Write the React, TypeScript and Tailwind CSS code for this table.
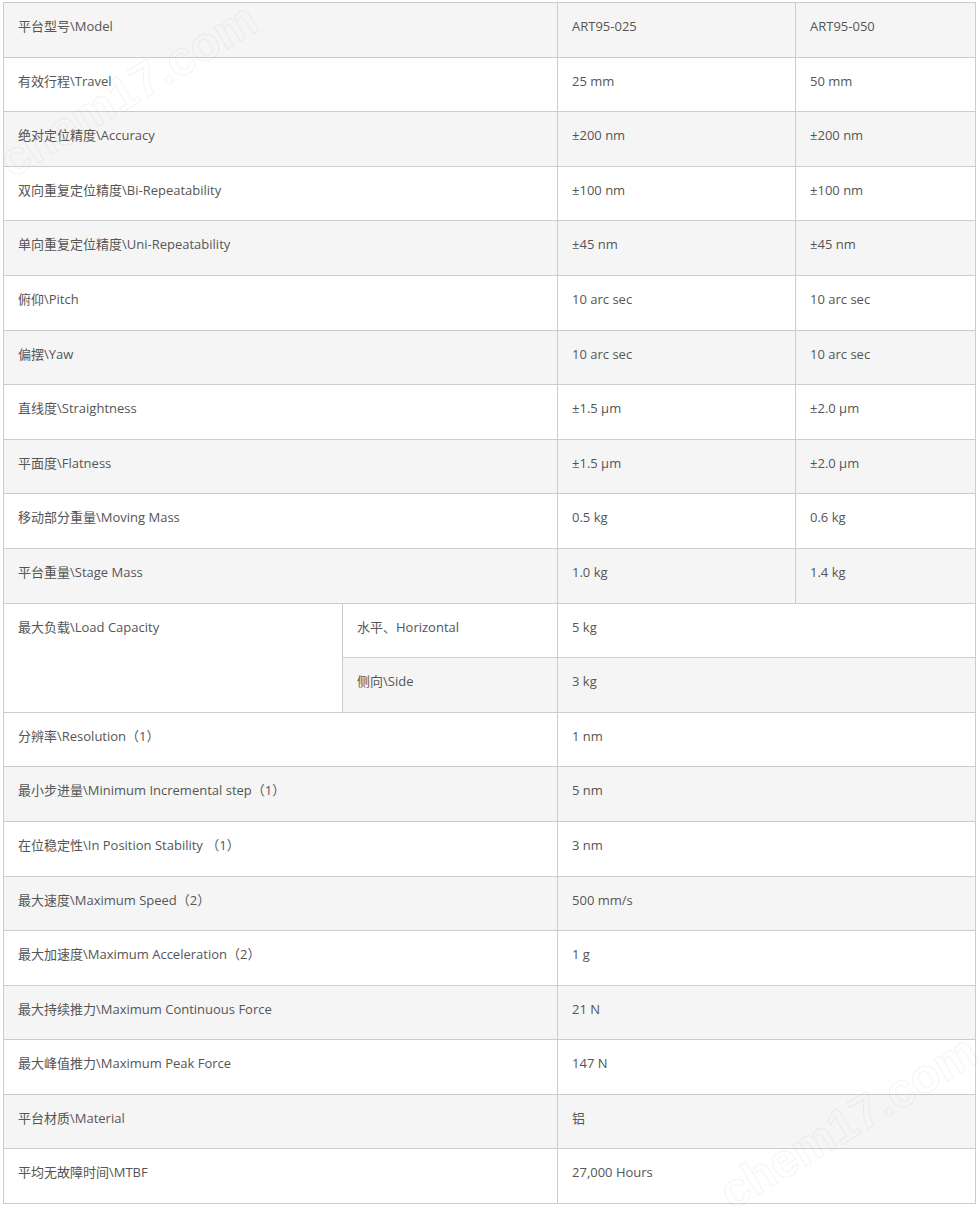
import React from "react";

type Row = { label: string; a: string; b?: string };

const topRows: Row[] = [
  { label: "平台型号\\Model", a: "ART95-025", b: "ART95-050" },
  { label: "有效行程\\Travel", a: "25 mm", b: "50 mm" },
  { label: "绝对定位精度\\Accuracy", a: "±200 nm", b: "±200 nm" },
  { label: "双向重复定位精度\\Bi-Repeatability", a: "±100 nm", b: "±100 nm" },
  { label: "单向重复定位精度\\Uni-Repeatability", a: "±45 nm", b: "±45 nm" },
  { label: "俯仰\\Pitch", a: "10 arc sec", b: "10 arc sec" },
  { label: "偏摆\\Yaw", a: "10 arc sec", b: "10 arc sec" },
  { label: "直线度\\Straightness", a: "±1.5 µm", b: "±2.0 µm" },
  { label: "平面度\\Flatness", a: "±1.5 µm", b: "±2.0 µm" },
  { label: "移动部分重量\\Moving Mass", a: "0.5 kg", b: "0.6 kg" },
  { label: "平台重量\\Stage Mass", a: "1.0 kg", b: "1.4 kg" },
];

const bottomRows: Row[] = [
  { label: "分辨率\\Resolution（1）", a: "1 nm" },
  { label: "最小步进量\\Minimum Incremental step（1）", a: "5 nm" },
  { label: "在位稳定性\\In Position Stability （1）", a: "3 nm" },
  { label: "最大速度\\Maximum Speed（2）", a: "500 mm/s" },
  { label: "最大加速度\\Maximum Acceleration（2）", a: "1 g" },
  { label: "最大持续推力\\Maximum Continuous Force", a: "21 N" },
  { label: "最大峰值推力\\Maximum Peak Force", a: "147 N" },
  { label: "平台材质\\Material", a: "铝" },
  { label: "平均无故障时间\\MTBF", a: "27,000 Hours" },
];

const td =
  "border border-[#cccccc] align-top pl-[14px] pr-2 pt-[13px] pb-0 leading-[20px] text-[13px] text-[#555555]";

const wm =
  "pointer-events-none select-none absolute w-max whitespace-nowrap rotate-[-31deg] text-[48px] leading-[56px] font-bold text-transparent";

export default function App() {
  return (
    <div
      className="relative w-[979px] h-[1208px] bg-white overflow-hidden"
      style={{ fontFamily: '"Open Sans", "Noto Sans CJK SC", sans-serif' }}
    >
      <div className="pt-[2px] pl-[3px]">
        <table className="table-fixed border-collapse w-[972px]">
          <colgroup>
            <col className="w-[339px]" />
            <col className="w-[215px]" />
            <col className="w-[238px]" />
            <col className="w-[180px]" />
          </colgroup>
          <tbody>
            {topRows.map((r, i) => (
              <tr
                key={r.label}
                className={`h-[54.6px] ${i % 2 === 0 ? "bg-[#f5f5f5]" : "bg-white"}`}
              >
                <td className={td} colSpan={2}>
                  {r.label}
                </td>
                <td className={td}>{r.a}</td>
                <td className={td}>{r.b}</td>
              </tr>
            ))}
            <tr className="h-[54.6px] bg-white">
              <td className={td} rowSpan={2}>
                最大负载\Load Capacity
              </td>
              <td className={td}>水平、Horizontal</td>
              <td className={td} colSpan={2}>
                5 kg
              </td>
            </tr>
            <tr className="h-[54.6px] bg-[#f5f5f5]">
              <td className={td}>侧向\Side</td>
              <td className={td} colSpan={2}>
                3 kg
              </td>
            </tr>
            {bottomRows.map((r, i) => (
              <tr
                key={r.label}
                className={`h-[54.6px] ${i % 2 === 0 ? "bg-white" : "bg-[#f5f5f5]"}`}
              >
                <td className={td} colSpan={2}>
                  {r.label}
                </td>
                <td className={td} colSpan={2}>
                  {r.a}
                </td>
              </tr>
            ))}
          </tbody>
        </table>
      </div>
      <div
        aria-hidden="true"
        className={`${wm} left-[-17px] top-[62px]`}
        style={{ WebkitTextStroke: "1px rgba(0,0,0,0.05)", fontFamily: '"Liberation Sans", sans-serif' }}
      >
        chem17.com
      </div>
      <div
        aria-hidden="true"
        className={`${wm} left-[703px] top-[1094px]`}
        style={{ WebkitTextStroke: "1px rgba(0,0,0,0.05)", fontFamily: '"Liberation Sans", sans-serif' }}
      >
        chem17.com
      </div>
    </div>
  );
}
